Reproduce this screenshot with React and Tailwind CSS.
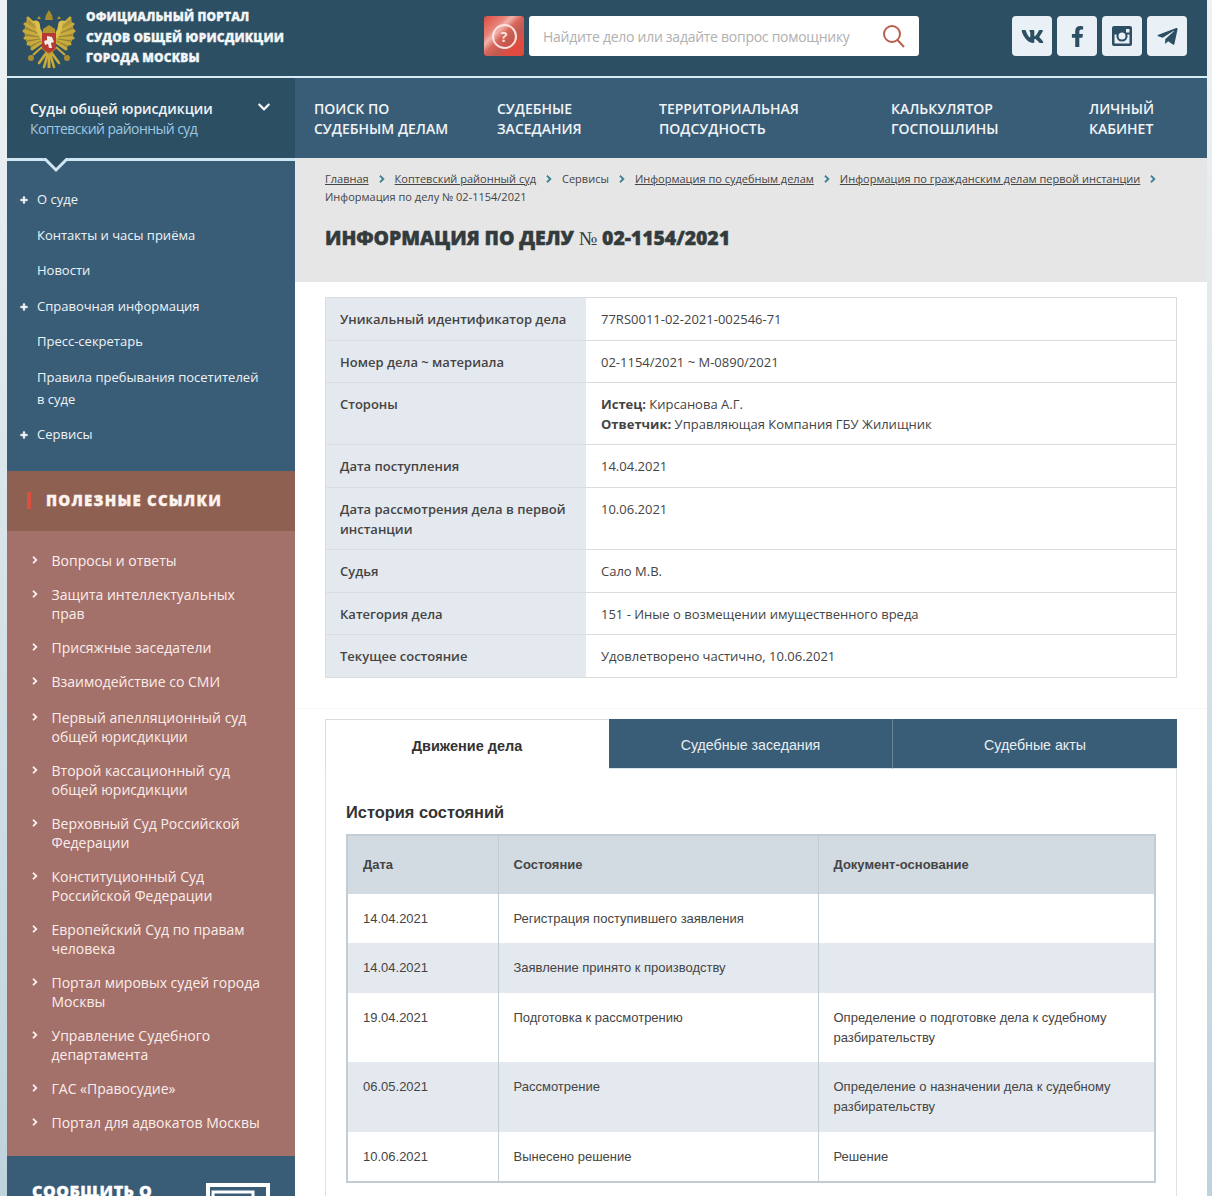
import React from 'react';
import { FaVk, FaFacebookF, FaTelegramPlane, FaChevronRight, FaChevronDown, FaPlus } from 'react-icons/fa';

const topNav = [
  ['ПОИСК ПО', 'СУДЕБНЫМ ДЕЛАМ'],
  ['СУДЕБНЫЕ', 'ЗАСЕДАНИЯ'],
  ['ТЕРРИТОРИАЛЬНАЯ', 'ПОДСУДНОСТЬ'],
  ['КАЛЬКУЛЯТОР', 'ГОСПОШЛИНЫ'],
  ['ЛИЧНЫЙ', 'КАБИНЕТ'],
];

const sideMenu = [
  { label: 'О суде', plus: true },
  { label: 'Контакты и часы приёма' },
  { label: 'Новости' },
  { label: 'Справочная информация', plus: true },
  { label: 'Пресс-секретарь' },
  { label: 'Правила пребывания посетителей в суде' },
  { label: 'Сервисы', plus: true },
];

const usefulLinks = [
  'Вопросы и ответы',
  'Защита интеллектуальных прав',
  'Присяжные заседатели',
  'Взаимодействие со СМИ',
  'Первый апелляционный суд общей юрисдикции',
  'Второй кассационный суд общей юрисдикции',
  'Верховный Суд Российской Федерации',
  'Конституционный Суд Российской Федерации',
  'Европейский Суд по правам человека',
  'Портал мировых судей города Москвы',
  'Управление Судебного департамента',
  'ГАС «Правосудие»',
  'Портал для адвокатов Москвы',
];

const caseInfo = [
  ['Уникальный идентификатор дела', '77RS0011-02-2021-002546-71'],
  ['Номер дела ~ материала', '02-1154/2021 ~ М-0890/2021'],
  ['Стороны', null],
  ['Дата поступления', '14.04.2021'],
  ['Дата рассмотрения дела в первой инстанции', '10.06.2021'],
  ['Судья', 'Сало М.В.'],
  ['Категория дела', '151 - Иные о возмещении имущественного вреда'],
  ['Текущее состояние', 'Удовлетворено частично, 10.06.2021'],
];

const history = [
  ['14.04.2021', 'Регистрация поступившего заявления', ''],
  ['14.04.2021', 'Заявление принято к производству', ''],
  ['19.04.2021', 'Подготовка к рассмотрению', 'Определение о подготовке дела к судебному разбирательству'],
  ['06.05.2021', 'Рассмотрение', 'Определение о назначении дела к судебному разбирательству'],
  ['10.06.2021', 'Вынесено решение', 'Решение'],
];

const crumbs = [
  ['Главная', true],
  ['Коптевский районный суд', true],
  ['Сервисы', false],
  ['Информация по судебным делам', true],
  ['Информация по гражданским делам первой инстанции', true],
];

const EmblemSide = () => (
  <g>
    {/* wing base */}
    <path d="M20 22 C13 13 8 8 5 9 L2 22 L4 32 L10 40 L21 34 Z" fill="#b3963a" />
    {/* feathers */}
    <g stroke="#c9ab3c" strokeWidth="3" strokeLinecap="round">
      <path d="M19 24 L6 9" />
      <path d="M19 25 L3 15" />
      <path d="M19 27 L2 22" />
      <path d="M19 29 L3 29" />
      <path d="M19 31 L6 35" />
      <path d="M20 33 L10 40" />
    </g>
    <g stroke="#7d7436" strokeWidth="0.7">
      <path d="M18 22 L7 12" />
      <path d="M18 25 L4 19" />
      <path d="M18 28 L4 26" />
      <path d="M18 30 L5 32" />
      <path d="M19 32 L8 38" />
    </g>
    {/* neck and head */}
    <path d="M22 26 C17 22 19 16 17 13 C15 11 12 11 9 13 L13 14 C14 18 14 24 19 30 Z" fill="#dcc04e" />
    <path d="M15 10 L17 7 L19 10 Z" fill="#b2932e" />
    {/* claw, orb or sceptre */}
    <path d="M20 38 L11 46" stroke="#c9ab3c" strokeWidth="2" />
    <circle cx="9" cy="49" r="3" fill="#a98c30" />
    {/* tail feathers */}
    <g stroke="#c9ab3c" strokeWidth="2.6" strokeLinecap="round">
      <path d="M25 43 L17 54" />
      <path d="M26 44 L22 58" />
    </g>
  </g>
);

const Emblem = () => (
  <svg width="54" height="60" viewBox="0 0 54 60" className="mt-[6px] shrink-0">
    <EmblemSide />
    <g transform="matrix(-1 0 0 1 54 0)">
      <EmblemSide />
    </g>
    <path d="M27 44 L27 59" stroke="#c9ab3c" strokeWidth="3" />
    <path d="M24 6 L27 1 L30 6 L31 11 L23 11 Z" fill="#a98c30" />
    <path d="M21 20 L27 16 L33 20 L34 40 L27 46 L20 40 Z" fill="#b2932e" />
    {/* shield */}
    <path d="M20 24 H34 V37 C34 41 30 42 27 44 C24 42 20 41 20 37 Z" fill="#b63a33" />
    <path d="M25 27 L30 28 L32 33 L29 34 L30 39 L27 39 L26 35 L23 36 L22 32 L25 31 Z" fill="#f1ece4" />
  </svg>
);

const InstagramIcon = () => (
  <svg width="20" height="20" viewBox="0 0 20 20">
    <path
      fillRule="evenodd"
      fill="#2d4f63"
      d="M2 0 H18 A2 2 0 0 1 20 2 V18 A2 2 0 0 1 18 20 H2 A2 2 0 0 1 0 18 V2 A2 2 0 0 1 2 0 Z M14 3 V6.5 H17.5 V3 Z M2.5 8.5 V17 A.5 .5 0 0 0 3 17.5 H17 A.5 .5 0 0 0 17.5 17 V8.5 H15.4 A5.6 5.6 0 1 1 4.6 8.5 Z M10 6.6 A3.5 3.5 0 1 0 10 13.6 A3.5 3.5 0 1 0 10 6.6 Z"
    />
  </svg>
);

const socials = [
  <FaVk key="vk" size={23} color="#2d4f63" />,
  <FaFacebookF key="fb" size={21} color="#2d4f63" />,
  <InstagramIcon key="ig" />,
  <FaTelegramPlane key="tg" size={23} color="#2d4f63" />,
];

const Header = () => (
  <header className="flex h-[76px] items-center bg-[#2d4f63] pb-1 pl-[15px] pr-5">
    <Emblem />
    <div className="ml-[10px] mt-1 w-[398px] font-['Open_Sans',sans-serif] text-[12px] leading-[20.5px] font-extrabold tracking-[0.15px] text-[#f3f6f7] [-webkit-text-stroke:0.3px_#f3f6f7]">
      <div>ОФИЦИАЛЬНЫЙ ПОРТАЛ</div>
      <div>СУДОВ ОБЩЕЙ ЮРИСДИКЦИИ</div>
      <div>ГОРОДА МОСКВЫ</div>
    </div>
    <button className="flex h-10 w-10 items-center justify-center rounded-[3px] bg-[linear-gradient(135deg,#de4a3e_0%,#e8847a_28%,#f0b4ac_36%,#d9655b_48%,#c25a52_62%,#e14b3f_78%,#e04a3e_100%)]">
      <span className="flex h-[25px] w-[25px] items-center justify-center rounded-full border-2 border-[#fbe3df] font-['Open_Sans',sans-serif] text-[14px] font-bold text-[#fbe3df]">?</span>
    </button>
    <div className="ml-[5px] flex h-10 w-[390px] items-center justify-between rounded-[3px] bg-white pl-[14px] pr-[13px]">
      <span className="font-['Open_Sans',sans-serif] text-[14px] tracking-[-0.27px] text-[#b0b0b0]">Найдите дело или задайте вопрос помощнику</span>
      <svg width="24" height="24" viewBox="0 0 24 24" fill="none" stroke="#b8604f" strokeWidth="2">
        <circle cx="10" cy="10" r="8" />
        <path d="M15.5 16 L22 23" />
      </svg>
    </div>
    <div className="ml-[93px] flex gap-[5px]">
      {socials.map((icon, i) => (
        <a key={i} className="flex h-10 w-10 items-center justify-center rounded-[4px] bg-[#eaf1f6]">{icon}</a>
      ))}
    </div>
  </header>
);

const TopNav = () => (
  <div className="flex h-[82px] border-t-2 border-[#d6edf6] bg-[#3a5d77]">
    <div className="flex w-[288px] shrink-0 items-start justify-between bg-[#2d4f63] pl-[23px] pr-6 pt-[21px] font-['Open_Sans',sans-serif]">
      <div>
        <div className="text-[14px] leading-[20px] font-semibold text-[#f0f4f6]">Суды общей юрисдикции</div>
        <div className="text-[14px] leading-[20px] tracking-[-0.55px] text-[#9cc8e2]">Коптевский районный суд</div>
      </div>
      <FaChevronDown size={14} color="#f3f6f7" className="mt-px" />
    </div>
    <nav className="grid flex-1 grid-cols-[183px_162px_232px_198px_1fr] pl-[19px] pt-[21px] font-['Open_Sans',sans-serif] text-[14px] leading-[20px] font-semibold text-[#f0f4f6]">
      {topNav.map((item) => (
        <a key={item[0]} className="block">
          <div>{item[0]}</div>
          <div>{item[1]}</div>
        </a>
      ))}
    </nav>
  </div>
);

const Sidebar = () => (
  <aside className="w-[288px] shrink-0 font-['Open_Sans',sans-serif]">
    <div className="relative h-[313px] border-t-[3px] border-[#cfe6f3] bg-[#3a5d77] pt-[21px]">
      <svg width="26" height="15" viewBox="0 0 26 15" className="absolute left-[36px] top-[-3px]">
        <path d="M0 0 L13 13 L26 0 Z" fill="#2d4f63" />
        <path d="M1 0 L13 12 L25 0" fill="none" stroke="#cfe6f3" strokeWidth="3" />
      </svg>
      <ul>
        {sideMenu.map((item) => (
          <li key={item.label} className="relative py-[7px] pl-[30px] pr-[30px] text-[13px] leading-[21.6px] text-[#eef3f6]">
            {item.plus && <FaPlus size={8} color="#fff" stroke="#fff" strokeWidth={40} className="absolute left-[13px] top-[14px]" />}
            {item.label}
          </li>
        ))}
      </ul>
    </div>
    <div className="flex h-[60px] items-center bg-[#8e6052] pb-[2px] pl-5">
      <span className="h-[17px] w-1 bg-[#d9503f]" />
      <span className="ml-[15px] text-[15px] font-extrabold tracking-[1.2px] text-[#fdf3ee] [-webkit-text-stroke:0.3px_#fdf3ee]">ПОЛЕЗНЫЕ ССЫЛКИ</span>
    </div>
    <ul className="bg-[#a4706a] pb-[17px] pt-3">
      {usefulLinks.map((link, i) => (
        <li key={link} className={`relative py-[7.5px] pl-[44.5px] pr-[30px] text-[14px] leading-[19px] text-[#fbeeea] ${i === 4 ? 'mt-[2px]' : ''}`}>
          <FaChevronRight size={8} color="#fff" stroke="#fff" strokeWidth={40} className="absolute left-[24px] top-[13px]" />
          {link}
        </li>
      ))}
    </ul>
    <div className="flex h-[60px] items-start justify-between bg-[#3a5d77] pl-[25px] pr-[25px] pt-[25px]">
      <span className="text-[16px] leading-[20px] font-extrabold tracking-[0.5px] text-white [-webkit-text-stroke:0.3px_#fff]">СООБЩИТЬ О</span>
      <svg width="64" height="34" viewBox="0 0 64 34" className="mt-[2px]" fill="none" stroke="#fff">
        <path d="M2 20 V2 H62 V34" strokeWidth="4" />
        <rect x="7" y="9" width="40" height="24" strokeWidth="3" />
      </svg>
    </div>
  </aside>
);

const Breadcrumbs = () => (
  <div className="flex flex-wrap items-center text-[11px] leading-[18px] text-[#444]">
    {crumbs.map(([text, isLink]) => (
      <React.Fragment key={text}>
        <span className={isLink ? 'underline' : ''}>{text}</span>
        <FaChevronRight size={8} color="#2f7a8c" stroke="#2f7a8c" strokeWidth={50} className="mx-[9px]" />
      </React.Fragment>
    ))}
    <span className="w-full">Информация по делу № 02-1154/2021</span>
  </div>
);

const InfoTable = () => (
  <div className="border border-b-0 border-[#d9dde0] text-[13px] leading-[19.6px] text-[#444]">
    {caseInfo.map(([label, value]) => (
      <div key={label} className="flex border-b border-[#d9dde0]">
        <div className="w-[260px] shrink-0 bg-[#e4e9ef] pb-[10px] pl-[14px] pr-1 pt-3 font-semibold">{label}</div>
        <div className="flex-1 pb-[10px] pl-[15px] pt-3">
          {value ?? (
            <>
              <div><b className="font-bold">Истец:</b> Кирсанова А.Г.</div>
              <div><b className="font-bold">Ответчик:</b> Управляющая Компания ГБУ Жилищник</div>
            </>
          )}
        </div>
      </div>
    ))}
  </div>
);

const Tabs = () => (
  <div className="-mx-px flex h-[50px] font-['Liberation_Sans',sans-serif] text-[14.2px]">
    <div className="flex w-[284px] items-center justify-center border-x border-t border-[#d9dde0] border-r-transparent pt-[5px] text-[14.5px] font-bold text-[#333]">Движение дела</div>
    <div className="flex w-[283px] items-center justify-center border-b border-[#d9e3ea] bg-[#3a5d77] pt-[5px] text-[#e8eef2]">Судебные заседания</div>
    <div className="flex flex-1 items-center justify-center border-b border-l border-[#d9e3ea] border-l-[#6a8497] bg-[#3a5d77] pt-[5px] text-[#e8eef2]">Судебные акты</div>
  </div>
);

const HistoryTable = () => (
  <table className="w-[810px] table-fixed border-collapse border-2 border-[#c2ccd2] font-['Liberation_Sans',sans-serif] text-[13px] leading-[20px] text-[#444]">
    <colgroup>
      <col className="w-[151px]" />
      <col className="w-[320px]" />
      <col />
    </colgroup>
    <thead>
      <tr className="h-[59px] bg-[#d2dae2] text-left text-[13px] font-bold">
        {['Дата', 'Состояние', 'Документ-основание'].map((h) => (
          <th key={h} className="border-x border-[#c2ccd2] px-[15px] font-bold">{h}</th>
        ))}
      </tr>
    </thead>
    <tbody>
      {history.map((row, i) => (
        <tr key={i} className={i % 2 === 1 ? 'bg-[#e4e9ef]' : 'bg-white'}>
          {row.map((cell, j) => (
            <td key={j} className="border-x border-[#c2ccd2] px-[15px] pb-[14.4px] pt-[15px] align-top">{cell}</td>
          ))}
        </tr>
      ))}
    </tbody>
  </table>
);

const Main = () => (
  <main className="min-w-0 flex-1 bg-white font-['Open_Sans',sans-serif]">
    <div className="h-[124px] bg-[#e6e6e6] pl-[30px] pr-6 pt-3">
      <Breadcrumbs />
      <h1 className="mt-[18px] text-[19.5px] leading-[28px] font-extrabold tracking-[-0.1px] text-[#333b3d] [-webkit-text-stroke:0.4px_#333b3d]">
        ИНФОРМАЦИЯ ПО ДЕЛУ <span className="font-['Liberation_Serif',serif] font-normal [-webkit-text-stroke:0]">№</span> 02-1154/2021
      </h1>
    </div>
    <div className="h-[427px] border-b border-[#f6f6f6] pl-[30px] pr-[30px] pt-[15px]">
      <InfoTable />
    </div>
    <div className="ml-[30px] mr-[30px] mt-[10px] border-x border-[#dfe2e4]">
      <Tabs />
      <div className="px-5 pb-10 pt-[32px]">
        <h2 className="mb-[11px] font-['Liberation_Sans',sans-serif] text-[16.4px] leading-[22px] font-bold text-[#333]">История состояний</h2>
        <HistoryTable />
      </div>
    </div>
  </main>
);

const App = () => (
  <div className="h-[1196px] overflow-hidden bg-linear-to-b from-[#eef2f4] to-[#bfd3dd] px-[7px]">
    <div className="w-[1200px]">
      <Header />
      <TopNav />
      <div className="flex">
        <Sidebar />
        <Main />
      </div>
    </div>
  </div>
);

export default App;
